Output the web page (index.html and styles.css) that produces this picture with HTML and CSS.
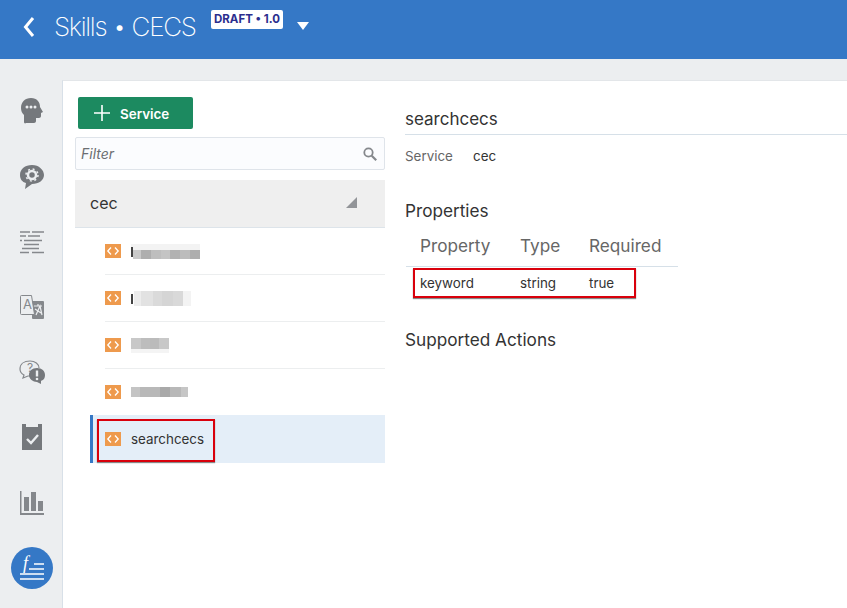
FILE: index.html
```html
<!DOCTYPE html>
<html>
<head>
  <title>Skills - CECS</title>
  <link rel="stylesheet" href="styles.css">
</head>
<body>
<svg class="defs" width="0" height="0">
  <symbol id="code" viewBox="0 0 16 14">
    <rect width="16" height="14" fill="#ee9a4d"/>
    <path d="M6 3.500 2.800 7 6 10.500M10 3.500 13.200 7 10 10.500" fill="none" stroke="#fff" stroke-width="1.300"/>
  </symbol>
</svg>

<header class="top-bar">
  <svg class="back-icon" width="12" height="22" viewBox="0 0 12 22"><path d="M10 2 2.500 11l7.500 9" fill="none" stroke="#fff" stroke-width="3"/></svg>
  <h1 class="app-title">Skills • CECS</h1>
  <span class="draft-badge">DRAFT • 1.0</span>
  <span class="caret"></span>
</header>

<div class="page">
  <nav class="rail">
    <svg class="rail-icon" width="24" height="26" viewBox="0 0 24 26">
      <path d="M11 0C5 0 1 4 1 10c0 3 1 5 3 7v7c0 1 1 2 2 1h8c1 0 2-1 2-2v-3h3c1 0 2-1 2-2v-3l2-1-3-5C20 4 17 0 11 0z" fill="#75787c"/>
      <circle cx="7" cy="9" r="1.500" fill="#eceef0"/><circle cx="11" cy="9" r="1.500" fill="#eceef0"/><circle cx="15" cy="9" r="1.500" fill="#eceef0"/>
    </svg>
    <svg class="rail-icon" width="24" height="24" viewBox="0 0 24 24">
      <path d="M12 0C5 0 0 4 0 10c0 4 2 7 6 8l-1 6 7-5c7 0 12-4 12-9S19 0 12 0z" fill="#75787c"/>
      <circle cx="12" cy="10" r="4" fill="none" stroke="#eceef0" stroke-width="2.500"/>
      <circle cx="12" cy="10" r="6" fill="none" stroke="#eceef0" stroke-width="1.500" stroke-dasharray="2 2.700"/>
    </svg>
    <svg class="rail-icon" width="24" height="24" viewBox="0 0 24 24" stroke="#85888c" stroke-width="1.700">
      <path d="M0 2h10M12 2h12M0 6h6M8 6h12M0 10.500h2M4 10.500h18M4 14.500h15M2 18.500h17M0 22.500h9M12 22.500h12"/>
    </svg>
    <svg class="rail-icon" width="24" height="24" viewBox="0 0 24 24">
      <path d="M12 6h11a1 1 0 0 1 1 1v16a1 1 0 0 1-1 1H13a1 1 0 0 1-1-1z" fill="#85888c"/>
      <path d="M1.500.500h10l3 19h-13a1 1 0 0 1-1-1V1.500a1 1 0 0 1 1-1z" fill="#eceef0" stroke="#85888c"/>
      <text class="glyph-a" x="3" y="14">A</text>
      <path d="M14 11h8M18 9v2M16 20l4-9 2 9M15 14l6 4" stroke="#eceef0" stroke-width="1.200" fill="none"/>
    </svg>
    <svg class="rail-icon" width="26" height="24" viewBox="0 0 26 24">
      <path d="M11 1C5 1 1 4 1 9c0 3 2 5 4 6l-1 3 5-2h3" fill="none" stroke="#85888c" stroke-width="1.200"/>
      <path d="M11 1c5 0 9 3 9 7" fill="none" stroke="#85888c" stroke-width="1.200"/>
      <text class="glyph-q" x="8" y="12">?</text>
      <path d="M18 8c5 0 8 3 8 7s-2 5-4 6v3l-4-2c-4 0-8-3-8-7s3-7 8-7z" fill="#75787c"/>
      <path d="M18 10.500v6" stroke="#eceef0" stroke-width="2.400"/><circle cx="18" cy="19" r="1.300" fill="#eceef0"/>
    </svg>
    <svg class="rail-icon" width="20" height="26" viewBox="0 0 20 26">
      <path d="M0 0h4v3h12V0h4v26H0z" fill="#75787c"/>
      <path d="m5 15 4 4 7-8" fill="none" stroke="#eceef0" stroke-width="2.400"/>
    </svg>
    <svg class="rail-icon" width="24" height="24" viewBox="0 0 24 24" fill="#85888c">
      <path d="M0 0h1.500v22H24v2H0z"/><rect x="4" y="6" width="5" height="14"/><rect x="11" y="1" width="5" height="19"/><rect x="18" y="10" width="5" height="10"/>
    </svg>
    <span class="rail-active">
      <svg class="func-icon" width="24" height="24" viewBox="0 0 24 24">
        <text class="glyph-f" x="3" y="13">f</text>
        <path d="M14 8h10M9 13h15M0 18h24M0 23h24" stroke="#fff" stroke-width="1.500"/>
      </svg>
    </span>
  </nav>

  <main class="panel">
    <section class="services">
      <button class="add-btn">
        <svg width="16" height="16" viewBox="0 0 16 16"><path d="M8 0v16M0 8h16" stroke="#fff" stroke-width="1.600"/></svg>
        <span class="add-label">Service</span>
      </button>
      <div class="filter">
        <span>Filter</span>
        <svg width="14" height="14" viewBox="0 0 14 14"><circle cx="5.500" cy="5.500" r="4.200" fill="none" stroke="#85888c" stroke-width="1.800"/><path d="m8.700 8.700 4.500 4.500" stroke="#85888c" stroke-width="2.200"/></svg>
      </div>
      <div class="group">
        <span>cec</span>
        <span class="group-arrow"></span>
      </div>
      <ul class="service-list">
        <li class="service-row"><svg class="code-icon"><use href="#code"/></svg><span class="blur blur-a"></span></li>
        <li class="service-row"><svg class="code-icon"><use href="#code"/></svg><span class="blur blur-b"></span></li>
        <li class="service-row"><svg class="code-icon"><use href="#code"/></svg><span class="blur blur-c"></span></li>
        <li class="service-row"><svg class="code-icon"><use href="#code"/></svg><span class="blur blur-d"></span></li>
        <li class="service-row selected">
          <span class="mark-left"><svg class="code-icon"><use href="#code"/></svg>searchcecs</span>
        </li>
      </ul>
    </section>

    <section class="detail">
      <h2 class="detail-title">searchcecs</h2>
      <div class="meta"><span class="meta-label">Service</span><span>cec</span></div>
      <h3 class="sub-head first">Properties</h3>
      <div class="prop-table">
        <div class="prop-row prop-head"><span>Property</span><span>Type</span><span>Required</span></div>
        <div class="prop-row prop-body"><span>keyword</span><span>string</span><span>true</span></div>
      </div>
      <h3 class="sub-head">Supported Actions</h3>
    </section>
  </main>
</div>
</body>
</html>
```

FILE: styles.css
```css
* {
  box-sizing: border-box;
}

html, body {
  height: 100%;
}

body {
  margin: 0;
  display: flex;
  flex-direction: column;
  overflow: hidden;
  background-color: #eceef0;
  color: #333;
  font-family: "Inter", "Liberation Sans", sans-serif;
}

.defs {
  display: block;
  height: 0;
}

.top-bar {
  height: 59px;
  flex: none;
  display: flex;
  align-items: flex-start;
  background-color: #3578c6;
  color: #fff;
}

.back-icon {
  margin: 16px 0 0 23px;
}

.app-title {
  width: 142px;
  margin: 9px 0 0 19px;
  font-size: 26px;
  line-height: 36px;
  font-weight: 200;
  letter-spacing: -1.300px;
  white-space: nowrap;
}

.draft-badge {
  margin: 10px 0 0 15px;
  width: 72px;
  height: 19px;
  background-color: #fff;
  border-radius: 2px;
  color: #2c2e8e;
  font-size: 11.500px;
  font-weight: 700;
  line-height: 19px;
  text-align: center;
}

.caret {
  margin: 22px 0 0 14px;
  border-left: 6px solid transparent;
  border-right: 6px solid transparent;
  border-top: 8px solid #fff;
}

.page {
  flex: 1;
  display: flex;
  min-height: 0;
}

.rail {
  width: 62px;
  flex: none;
  display: grid;
  grid-auto-rows: 65.200px;
  justify-items: center;
  align-items: center;
  padding: 19.900px 0 0 2px;
}

.glyph-a {
  font-size: 13px;
  fill: #85888c;
}

.glyph-q {
  font-size: 12px;
  fill: #85888c;
}

.glyph-f {
  font-family: "Liberation Serif", serif;
  font-size: 18px;
  font-style: italic;
  fill: #fff;
}

.func-icon {
  overflow: visible;
}

.rail-active {
  width: 42px;
  height: 42px;
  border-radius: 50%;
  background-color: #3578c6;
  display: flex;
  align-items: center;
  justify-content: center;
}

.panel {
  flex: 1;
  margin-top: 21px;
  display: flex;
  background-color: #fff;
  border-left: 1px solid #d8e0e8;
  border-top: 1px solid #e3e6e9;
}

.services {
  width: 322px;
  flex: none;
  padding: 16px 0 0 12px;
}

.add-btn {
  width: 115px;
  height: 32px;
  margin-left: 3px;
  display: flex;
  align-items: center;
  gap: 10px;
  padding: 0 0 0 16px;
  border: none;
  border-radius: 2px;
  background-color: #1c8a60;
  color: #fff;
  font-family: inherit;
  font-size: 13.400px;
  font-weight: 600;
}

.add-label {
  padding-top: 1px;
}

.filter {
  height: 33px;
  margin-top: 8px;
  display: flex;
  align-items: center;
  justify-content: space-between;
  padding: 0 7px 0 5px;
  background-color: #fbfcfe;
  border: 1px solid #dfe4ea;
  border-radius: 2px;
  color: #6b6e72;
  font-size: 14px;
  font-style: italic;
}

.group {
  height: 48px;
  margin-top: 10px;
  display: flex;
  align-items: center;
  justify-content: space-between;
  padding: 0 28px 2px 15px;
  background-color: #efefef;
  border-bottom: 1px solid #dde4ea;
  font-size: 16px;
}

.group-arrow {
  border-left: 11px solid transparent;
  border-bottom: 11px solid #929498;
}

.service-list {
  list-style: none;
  margin: 0;
  padding: 0 0 0 15px;
}

.service-row {
  height: 47px;
  margin-left: 15px;
  display: flex;
  align-items: center;
  gap: 10px;
  border-bottom: 1px solid #eceeef;
  font-size: 13.400px;
}

.service-row.selected {
  height: 48px;
  margin-top: -1px;
  margin-left: 0;
  padding-left: 4px;
  background-color: #e4eef8;
  border-bottom: none;
  border-left: 3px solid #3578c6;
  align-items: flex-start;
}

.mark-left {
  width: 118px;
  height: 43px;
  margin-top: 4px;
  display: flex;
  align-items: center;
  gap: 10px;
  padding: 0 0 3px 6px;
  border: 2px solid #d9000c;
  box-shadow: 0 1px 1px #888;
}

.code-icon {
  width: 16px;
  height: 14px;
  flex: none;
}

.blur {
  height: 15px;
  position: relative;
}

.blur::before {
  content: "";
  position: absolute;
  left: 0;
  top: 3px;
  width: 2px;
  height: 10px;
  background-color: #444;
}

.blur-c::before, .blur-d::before {
  display: none;
}

.blur-a {
  width: 69px;
  background:
    linear-gradient(#f3f3f3 0 40%, transparent 40%),
    linear-gradient(90deg, #fff 0 3%, #c9c9c9 3% 15%, #aeaeae 15% 29%, #bebebe 29% 43%, #c4c4c4 43% 57%, #b2b2b2 57% 71%, #bcbcbc 71% 85%, #aeaeae 85%);
}

.blur-b {
  width: 60px;
  background:
    linear-gradient(90deg, #fff 0 5%, #ededed 5% 17%, #e2e2e2 17% 36%, #dadada 36% 52%, #d5d5d5 52% 70%, #d9d9d9 70% 86%, #f3f3f3 86%);
}

.blur-c {
  width: 38px;
  background:
    linear-gradient(transparent 0 70%, #f4f4f4 70%),
    linear-gradient(90deg, #c8c8c8 0 26%, #bdbdbd 26% 50%, #bbbbbb 50% 74%, #c8c8c8 74%);
}

.blur-d {
  width: 57px;
  height: 10px;
  background: linear-gradient(90deg, #c4c4c4 0 16%, #b8b8b8 16% 51%, #a9a9a9 51% 69%, #b8b8b8 69% 87%, #c6c6c6 87%);
}

.detail {
  flex: 1;
  padding: 26px 0 0 20px;
}

.detail-title {
  margin: 0;
  height: 28px;
  font-size: 17px;
  font-weight: 400;
  line-height: 24px;
  border-bottom: 1px solid #d6e0e8;
}

.meta {
  display: flex;
  margin-top: 11px;
  font-size: 13.400px;
  line-height: 20px;
}

.meta-label {
  width: 68px;
  color: #666;
}

.sub-head {
  margin: 0;
  font-size: 17.200px;
  font-weight: 400;
  line-height: 24px;
}

.sub-head.first {
  margin-top: 33px;
}

.prop-table {
  width: 272px;
  margin: 11px 0 30px 1px;
}

.prop-row {
  display: grid;
  grid-template-columns: 100px 69px 1fr;
  padding-left: 14px;
}

.prop-head {
  height: 33px;
  border-bottom: 1px solid #d6e0e8;
  color: #666;
  font-size: 17.200px;
  line-height: 24px;
}

.prop-body {
  width: 223px;
  height: 30px;
  margin: 1px 0 0 7px;
  padding-left: 5px;
  align-items: center;
  border: 2px solid #d9000c;
  box-shadow: 0 1px 1px #888;
  font-size: 13.400px;
}
```
